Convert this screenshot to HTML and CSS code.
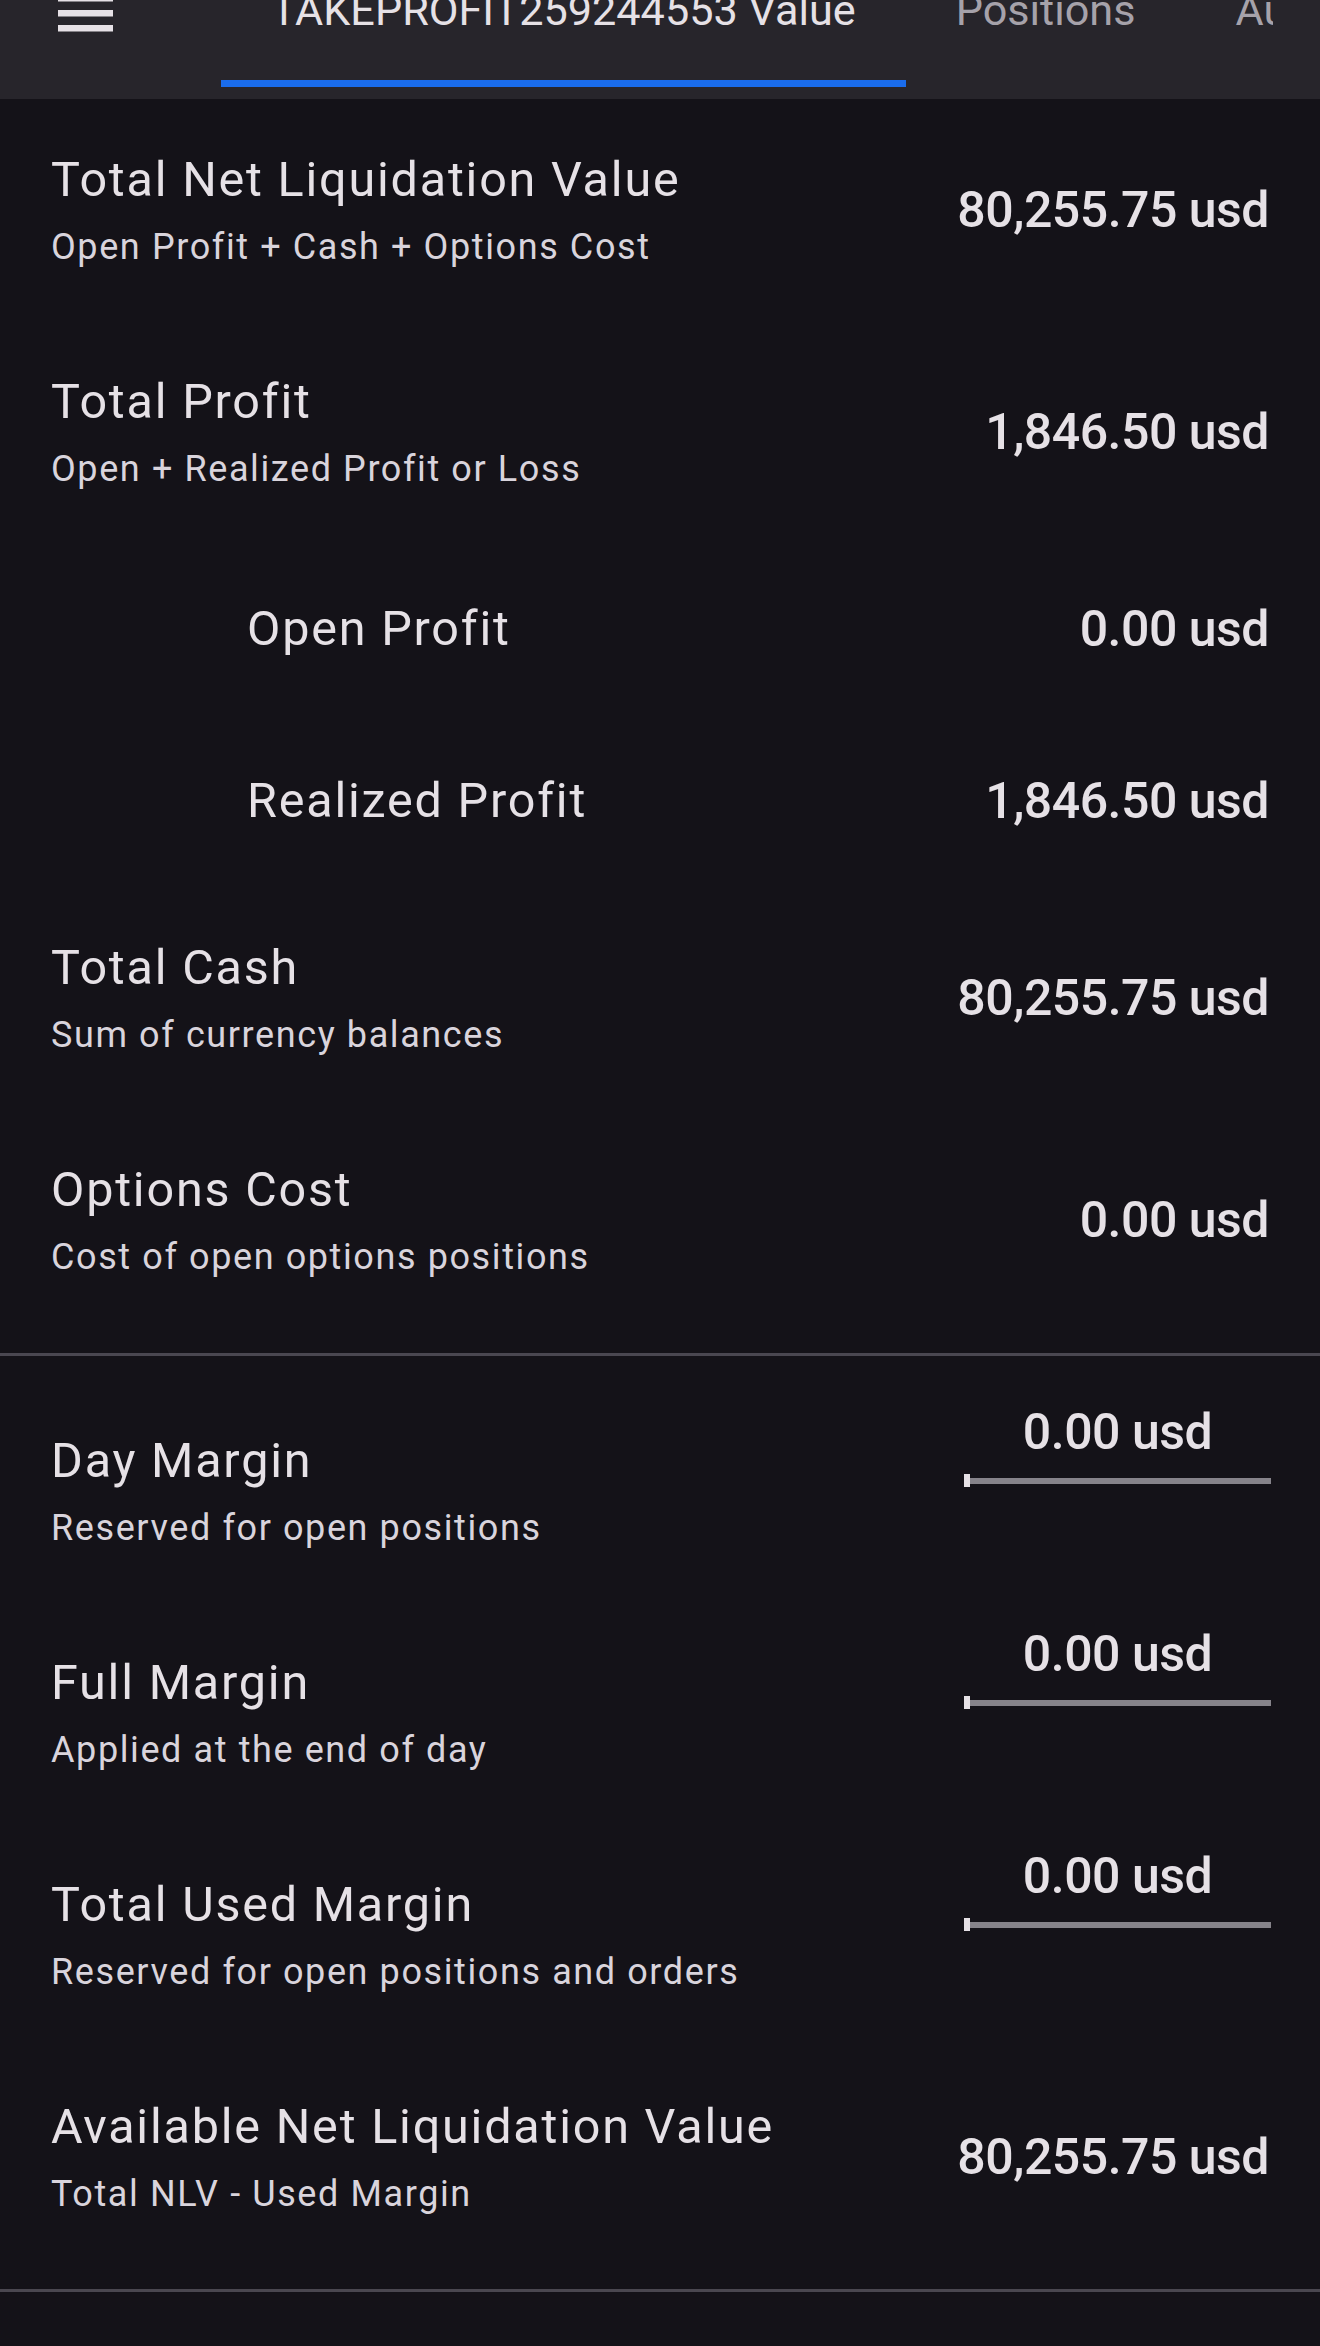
FILE: index.html
```html
<!DOCTYPE html>
<html lang="en">
<head>
<meta charset="utf-8">
<title>Account Value</title>
<link rel="stylesheet" href="styles.css">
</head>
<body>
<header class="appbar">
  <div class="appbar-row">
    <div class="menu-btn" aria-label="Menu">
      <svg width="55" height="37" viewBox="0 0 55 37"><rect x="0" y="0" width="55" height="6.5" fill="#e6e1e6"/><rect x="0" y="15" width="55" height="6.5" fill="#e6e1e6"/><rect x="0" y="30" width="55" height="6.5" fill="#e6e1e6"/></svg>
    </div>
    <nav class="tabs">
      <div class="tab active">TAKEPROFIT259244553 Value</div>
      <div class="tab">Positions</div>
      <div class="tab">Audit</div>
    </nav>
  </div>
</header>
<main>
  <section class="group group-top">
    <div class="row">
      <div class="label"><div class="title">Total Net Liquidation Value</div><div class="desc">Open Profit + Cash + Options Cost</div></div>
      <div class="value">80,255.75 usd</div>
    </div>
    <div class="row">
      <div class="label"><div class="title">Total Profit</div><div class="desc">Open + Realized Profit or Loss</div></div>
      <div class="value">1,846.50 usd</div>
    </div>
    <div class="row sub">
      <div class="label"><div class="title">Open Profit</div></div>
      <div class="value">0.00 usd</div>
    </div>
    <div class="row sub">
      <div class="label"><div class="title">Realized Profit</div></div>
      <div class="value">1,846.50 usd</div>
    </div>
    <div class="row">
      <div class="label"><div class="title">Total Cash</div><div class="desc">Sum of currency balances</div></div>
      <div class="value">80,255.75 usd</div>
    </div>
    <div class="row">
      <div class="label"><div class="title">Options Cost</div><div class="desc">Cost of open options positions</div></div>
      <div class="value">0.00 usd</div>
    </div>
  </section>
  <hr class="divider">
  <section class="group group-margins">
    <div class="row">
      <div class="label"><div class="title">Day Margin</div><div class="desc">Reserved for open positions</div></div>
      <div class="meter"><div class="value">0.00 usd</div><div class="bar"><span class="thumb"></span><span class="track"></span></div></div>
    </div>
    <div class="row">
      <div class="label"><div class="title">Full Margin</div><div class="desc">Applied at the end of day</div></div>
      <div class="meter"><div class="value">0.00 usd</div><div class="bar"><span class="thumb"></span><span class="track"></span></div></div>
    </div>
    <div class="row">
      <div class="label"><div class="title">Total Used Margin</div><div class="desc">Reserved for open positions and orders</div></div>
      <div class="meter"><div class="value">0.00 usd</div><div class="bar"><span class="thumb"></span><span class="track"></span></div></div>
    </div>
    <div class="row">
      <div class="label"><div class="title">Available Net Liquidation Value</div><div class="desc">Total NLV - Used Margin</div></div>
      <div class="value">80,255.75 usd</div>
    </div>
  </section>
  <hr class="divider">
</main>
</body>
</html>
```
FILE: styles.css
```css
html, body {
  margin: 0;
  padding: 0;
  background: #141218;
}
body {
  font-family: Roboto, "Noto Sans", "Liberation Sans", sans-serif;
  color: #e6e1e6;
  min-height: 2346px;
}
.appbar {
  height: 99px;
  background: #27252b;
  overflow: hidden;
}
.appbar-row {
  display: flex;
  align-items: flex-start;
  margin-top: -14px;
  padding-right: 47px;
}
.menu-btn {
  flex: none;
  width: 55px;
  height: 37px;
  margin-left: 58px;
  margin-top: 9px;
  margin-right: 108px;
}
.menu-btn svg { display: block; }
.tabs {
  flex: 1;
  display: flex;
  overflow: hidden;
}
.tab {
  flex: none;
  padding: 0 50px;
  height: 94px;
  font-size: 43.2px;
  line-height: 50px;
  color: #a6a2aa;
  white-space: nowrap;
  border-bottom: 7px solid transparent;
}
.tab.active {
  color: #e6e1e6;
  border-bottom-color: #1a6cec;
}
.group-top { padding-bottom: 22px; }
.group-margins { padding-top: 24px; padding-bottom: 21px; }
.divider {
  margin: 0;
  border: 0;
  height: 3px;
  background: #4a4750;
}
.row {
  display: flex;
  align-items: center;
  justify-content: space-between;
  height: 222px;
  padding: 0 51px;
  box-sizing: border-box;
}
.row.sub { height: 172px; }
.row.sub .label { padding-left: 196px; }
.title {
  font-size: 48.5px;
  line-height: 56px;
  letter-spacing: 1.8px;
  color: #e6e1e6;
}
.desc {
  margin-top: 17px;
  font-size: 36px;
  line-height: 44px;
  letter-spacing: 1.6px;
  color: #d9d4dc;
}
.value {
  font-size: 50px;
  line-height: 60px;
  font-weight: 500;
  letter-spacing: -0.5px;
  color: #e6e1e6;
  white-space: nowrap;
}
.meter {
  align-self: flex-start;
  margin-top: 22px;
  margin-right: -2px;
  width: 307px;
  display: flex;
  flex-direction: column;
  align-items: center;
}
.bar {
  margin-top: 12px;
  width: 100%;
  height: 13px;
  display: flex;
  align-items: center;
}
.thumb {
  flex: none;
  width: 6px;
  height: 13px;
  background: #e6e1e6;
}
.track {
  flex: 1;
  height: 6px;
  background: #86838a;
}
```
